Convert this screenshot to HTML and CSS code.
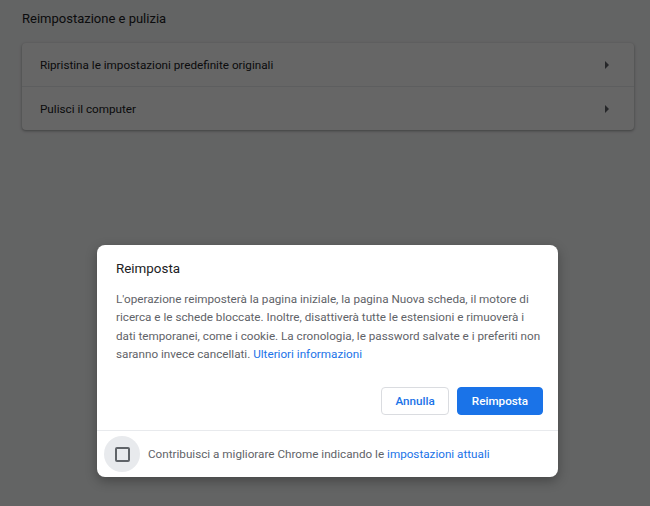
FILE: index.html
```html
<!DOCTYPE html>
<html>
<head>
<meta charset="utf-8">
<link rel="stylesheet" href="styles.css">
</head>
<body>
<div class="page">
  <h2 class="section-title">Reimpostazione e pulizia</h2>
  <div class="card">
    <div class="row">
      <span>Ripristina le impostazioni predefinite originali</span>
      <svg class="arrow" width="10" height="10" viewBox="0 0 10 10"><path d="M3 1 L7 5 L3 9 Z" fill="#5f6368"/></svg>
    </div>
    <div class="row sep">
      <span>Pulisci il computer</span>
      <svg class="arrow" width="10" height="10" viewBox="0 0 10 10"><path d="M3 1 L7 5 L3 9 Z" fill="#5f6368"/></svg>
    </div>
  </div>
</div>
<div class="overlay">
  <div class="dialog">
    <div class="dialog-main">
      <div class="dialog-title">Reimposta</div>
      <p class="dialog-body">L'operazione reimposterà la pagina iniziale, la pagina Nuova scheda, il motore di ricerca e le schede bloccate. Inoltre, disattiverà tutte le estensioni e rimuoverà i dati temporanei, come i cookie. La cronologia, le password salvate e i preferiti non saranno invece cancellati. <a class="link" href="#">Ulteriori informazioni</a></p>
      <div class="buttons">
        <button class="btn btn-cancel">Annulla</button>
        <button class="btn btn-action">Reimposta</button>
      </div>
    </div>
    <div class="dialog-footer">
      <div class="check-wrap"><div class="check"></div></div>
      <span class="footer-text">Contribuisci a migliorare Chrome indicando le <a class="link" href="#">impostazioni attuali</a></span>
    </div>
  </div>
</div>
</body>
</html>
```
FILE: styles.css
```css
html, body {
  margin: 0;
  padding: 0;
}
body {
  width: 650px;
  height: 506px;
  overflow: hidden;
  background: #f8f9fa;
  font-family: Roboto, "Liberation Sans", sans-serif;
  color: #202124;
  position: relative;
}
.page {
  padding: 11px 16px 0 22px;
}
.section-title {
  margin: 0;
  font-size: 13px;
  font-weight: 400;
  line-height: 16px;
  color: #202124;
}
.card {
  margin-top: 16px;
  width: 612px;
  background: #fff;
  border-radius: 4px;
  box-shadow: 0 1px 2px rgba(60,64,67,0.3), 0 1px 3px 1px rgba(60,64,67,0.15);
}
.row {
  height: 43px;
  display: flex;
  align-items: center;
  justify-content: space-between;
  padding: 0 22px 0 18px;
  font-size: 11.7px;
}
.row.sep {
  border-top: 1px solid #e8eaed;
}
.overlay {
  position: absolute;
  inset: 0;
  background: rgba(0,0,0,0.6);
  display: flex;
  justify-content: flex-start;
  align-items: flex-start;
  padding: 245px 0 0 97px;
  box-sizing: border-box;
}
.dialog {
  width: 461px;
  background: #fff;
  border-radius: 8px;
  box-shadow: 0 4px 12px rgba(0,0,0,0.3);
  overflow: hidden;
}
.dialog-main {
  padding: 14px 12px 15px 19px;
}
.dialog-title {
  font-size: 13.4px;
  line-height: 20px;
  color: #202124;
}
.dialog-body {
  margin: 11px 0 0 0;
  font-size: 11.7px;
  line-height: 18.3px;
  color: #5f6368;
}
.link {
  color: #1a73e8;
  text-decoration: none;
}
.buttons {
  display: flex;
  justify-content: flex-end;
  gap: 8px;
  margin-top: 24px;
  margin-right: 3px;
}
.btn {
  height: 28px;
  border-radius: 4px;
  font-family: Roboto, "Liberation Sans", sans-serif;
  font-size: 11.7px;
  font-weight: 500;
  padding: 0 14px;
  cursor: pointer;
}
.btn-cancel {
  background: #fff;
  color: #1a73e8;
  border: 1px solid #dadce0;
  padding: 0 13px;
}
.btn-action {
  background: #1a73e8;
  color: #fff;
  border: 1px solid #1a73e8;
}
.dialog-footer {
  border-top: 1px solid #e8eaed;
  display: flex;
  align-items: center;
  padding: 5px 16px 5px 7px;
  gap: 8px;
}
.check-wrap {
  width: 36px;
  height: 36px;
  border-radius: 50%;
  background: #e8eaed;
  display: flex;
  align-items: center;
  justify-content: center;
}
.check {
  width: 11px;
  height: 11px;
  border: 2px solid #5f6368;
  border-radius: 2px;
}
.footer-text {
  font-size: 11.7px;
  color: #5f6368;
}
```
